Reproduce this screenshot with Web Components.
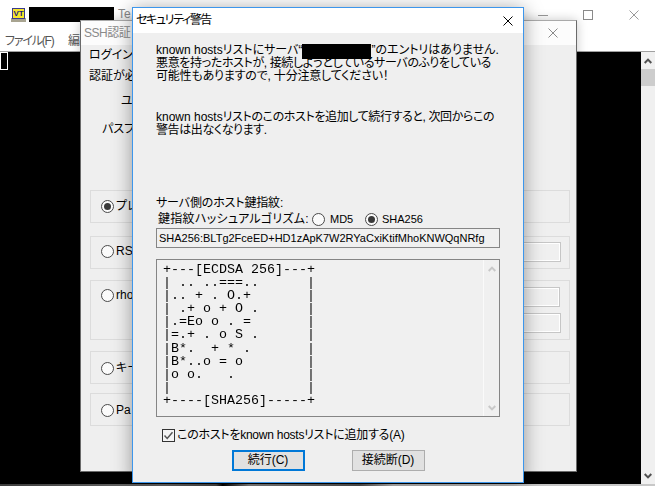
<!DOCTYPE html>
<html lang="ja">
<head>
<meta charset="utf-8">
<title>セキュリティ警告</title>
<style>
  html, body { margin: 0; height: 100%; }
  body {
    width: 655px;
    height: 486px;
    position: relative;
    overflow: hidden;
    background: #fff;
    color: #000;
    font: 12px/13px "Liberation Sans", "Noto Sans CJK JP", sans-serif;
    font-feature-settings: "palt";
    display: flex;
    flex-direction: column;
  }
</style>
</head>
<body>
  <term-window window-title="Te"></term-window>
  <task-strip></task-strip>

  <ssh-dialog>
    <auth-option label="プレ" checked style="--h:33px;--mt:0px;--radio-top:9px"></auth-option>
    <auth-option label="RS" fields="261" style="--h:33px;--mt:13px;--radio-top:8px;--field-top:5px"></auth-option>
    <auth-option label="rho" fields="260,261" style="--h:60px;--mt:11px;--radio-top:8px;--field-top:6px"></auth-option>
    <auth-option label="キー" style="--h:33px;--mt:11px;--radio-top:10px"></auth-option>
    <auth-option label="Pa" style="--h:33px;--mt:9px;--radio-top:10px"></auth-option>
  </ssh-dialog>

  <warn-dialog></warn-dialog>

<script>
const UI_FONT = '"Liberation Sans", "Noto Sans CJK JP", sans-serif';

class CloseGlyph extends HTMLElement {
  constructor() {
    super();
    this.attachShadow({ mode: 'open' });
  }

  connectedCallback() {
    this.shadowRoot.innerHTML = `
      <style>
        :host { display: block; width: 10px; height: 10px; color: inherit; }
        svg { display: block; }
      </style>
      <svg width="10" height="10" viewBox="0 0 10 10">
        <path d="M.5 .5 L9.5 9.5 M9.5 .5 L.5 9.5" stroke="currentColor" stroke-width="1" fill="none"/>
      </svg>
    `;
  }
}

class RadioMark extends HTMLElement {
  constructor() {
    super();
    this.attachShadow({ mode: 'open' });
  }

  connectedCallback() {
    const dot = this.hasAttribute('checked') ? '<i></i>' : '';
    this.shadowRoot.innerHTML = `
      <style>
        :host {
          display: flex;
          align-items: center;
          justify-content: center;
          flex: none;
          box-sizing: border-box;
          width: 13px;
          height: 13px;
          border: 1px solid #4a4a4a;
          border-radius: 50%;
          background: #fbfbfb;
        }
        i { display: block; width: 7px; height: 7px; border-radius: 50%; background: #3a3a3a; }
      </style>
      ${dot}
    `;
  }
}

class AuthOption extends HTMLElement {
  constructor() {
    super();
    this.attachShadow({ mode: 'open' });
  }

  connectedCallback() {
    const widths = (this.getAttribute('fields') || '').split(',').filter(Boolean);
    const fields = widths.map(w => `<div class="field" style="width:${w}px"></div>`).join('');
    this.shadowRoot.innerHTML = `
      <style>
        :host {
          display: flex;
          justify-content: space-between;
          box-sizing: border-box;
          width: 480px;
          height: var(--h);
          margin-top: var(--mt);
          padding: var(--radio-top, 9px) 8px 0 10px;
          border: 1px solid #dcdcdc;
        }
        .pick { display: flex; align-items: center; gap: 2px; align-self: flex-start; height: 13px; white-space: nowrap; }
        .fields { display: flex; flex-direction: column; gap: 6px; margin-top: calc(var(--field-top, 0px) - var(--radio-top, 9px) + 0px); }
        .field {
          box-sizing: border-box;
          height: 20px;
          border: 1px solid #c6c6c6;
          box-shadow: inset 0 0 0 1px #fff;
          background: #f0f0f0;
        }
      </style>
      <div class="pick">
        <radio-mark ${this.hasAttribute('checked') ? 'checked' : ''}></radio-mark>
        <span>${this.getAttribute('label')}</span>
      </div>
      <div class="fields">${fields}</div>
    `;
  }
}

class ScrollTrack extends HTMLElement {
  constructor() {
    super();
    this.attachShadow({ mode: 'open' });
  }

  connectedCallback() {
    const color = this.getAttribute('arrow') || '#555';
    this.shadowRoot.innerHTML = `
      <style>
        :host {
          display: flex;
          flex-direction: column;
          justify-content: space-between;
          flex: none;
          box-sizing: border-box;
          width: var(--track-w, 14px);
          background: #f0f0f0;
          position: relative;
        }
        .btn { height: 17px; display: flex; align-items: center; justify-content: center; }
        .thumb { position: absolute; left: 0; right: 0; top: 17px; height: 17px; background: #cdcdcd; }
        svg { display: block; }
      </style>
      <div class="btn">
        <svg width="8" height="6" viewBox="0 0 8 6"><path d="M.7 5 L4 1.6 L7.3 5" fill="none" stroke="${color}" stroke-width="2"/></svg>
      </div>
      ${this.hasAttribute('thumb') ? '<div class="thumb"></div>' : ''}
      <div class="btn">
        <svg width="8" height="6" viewBox="0 0 8 6"><path d="M.7 1 L4 4.4 L7.3 1" fill="none" stroke="${color}" stroke-width="2"/></svg>
      </div>
    `;
  }
}

class TermWindow extends HTMLElement {
  constructor() {
    super();
    this.attachShadow({ mode: 'open' });
  }

  connectedCallback() {
    this.shadowRoot.innerHTML = `
      <style>
        :host { display: flex; flex-direction: column; height: 484px; flex: none; background: #fff; }
        .title { display: flex; align-items: center; height: 31px; padding-left: 11px; flex: none; }
        .icon { display: block; flex: none; margin-top: -1px; }
        .hidden-name { width: 85px; height: 15px; background: #000; margin: -3px 4px 0 3px; flex: none; }
        .name { color: #8a8a8a; margin-top: -3px; white-space: nowrap; }
        .ctrl { margin-left: auto; display: flex; align-items: center; margin-top: -1px; color: #9a9a9a; }
        .ctrl > * { flex: none; }
        .min { width: 10px; height: 1px; background: #9a9a9a; margin-right: 35px; }
        .max { box-sizing: border-box; width: 10px; height: 10px; border: 1px solid #8a8a8a; margin-right: 36px; }
        close-glyph { margin-right: 16px; }
        .menu { display: flex; height: 20px; align-items: center; padding-left: 5px; color: #555; flex: none; }
        .menu .first { width: 63px; letter-spacing: -1.2px; white-space: nowrap; }
        .body { flex: 1; display: flex; border-top: 1px solid #a0a0a0; min-height: 0; }
        .screen { flex: 1; background: #000; }
        .cursor { box-sizing: border-box; width: 8px; height: 18px; border: 1px solid #fff; }
        scroll-track { --track-w: 14px; }
      </style>
      <div class="title">
        <svg class="icon" width="15" height="14" viewBox="0 0 15 14">
          <rect x="0" y="10" width="15" height="4" fill="#a8a490"/>
          <rect x="1.5" y=".5" width="12" height="10" fill="#f7e62a" stroke="#3a3a8c"/>
          <text x="7.5" y="8.4" font-family="Liberation Sans" font-size="8" font-weight="bold" text-anchor="middle" fill="#1c1c80">VT</text>
        </svg>
        <div class="hidden-name"></div>
        <div class="name">${this.getAttribute('window-title')}</div>
        <div class="ctrl">
          <div class="min"></div>
          <div class="max"></div>
          <close-glyph></close-glyph>
        </div>
      </div>
      <div class="menu"><span class="first">ファイル(F)</span><span>編</span></div>
      <div class="body">
        <div class="screen"><div class="cursor"></div></div>
        <scroll-track thumb arrow="#505050"></scroll-track>
      </div>
    `;
  }
}

class TaskStrip extends HTMLElement {
  constructor() {
    super();
    this.attachShadow({ mode: 'open' });
  }

  connectedCallback() {
    this.shadowRoot.innerHTML = `
      <style>
        :host {
          display: block;
          height: 2px;
          flex: none;
          background: linear-gradient(90deg, #3c3c3c 0, #6a6a6a 25%, #4a4a4a 33%, #000 34%, #888 38%, #555 55%, #bdbdbd 60%, #c8c8c8 100%);
        }
      </style>
    `;
  }
}

class SshDialog extends HTMLElement {
  constructor() {
    super();
    this.attachShadow({ mode: 'open' });
  }

  connectedCallback() {
    this.shadowRoot.innerHTML = `
      <style>
        :host {
          position: absolute;
          left: 80px;
          top: 20px;
          width: 497px;
          height: 452px;
          box-sizing: border-box;
          display: flex;
          flex-direction: column;
          background: #efefef;
          border: 1px solid #6a6a6a;
          border-top-color: #a9a9a9;
          box-shadow: 0 0 10px rgba(0, 0, 0, .22);
        }
        .title {
          display: flex;
          align-items: center;
          justify-content: space-between;
          height: 24px;
          flex: none;
          padding: 0 18px 0 3px;
          background: #fcfcfc;
          color: #8a8a8a;
        }
        .title span { letter-spacing: -.5px; }
        .content { flex: 1; padding: 0 0 0 8px; position: relative; }
        .line { white-space: nowrap; }
        .intro { padding-top: 4px; }
        .intro .line + .line { margin-top: 8px; }
        .cred { padding-top: 12px; }
        .cred .line { padding-left: 32px; }
        .cred .line + .line { margin-top: 15px; padding-left: 13px; }
        .options { margin-top: 54px; margin-left: 1px; }
      </style>
      <div class="title"><span>SSH認証</span><close-glyph></close-glyph></div>
      <div class="content">
        <div class="intro">
          <div class="line">ログイン</div>
          <div class="line">認証が必</div>
        </div>
        <div class="cred">
          <div class="line">ユ</div>
          <div class="line">パスフ</div>
        </div>
        <div class="options"><slot></slot></div>
      </div>
    `;
  }
}

class PushButton extends HTMLElement {
  constructor() {
    super();
    this.attachShadow({ mode: 'open' });
  }

  connectedCallback() {
    this.shadowRoot.innerHTML = `
      <style>
        :host {
          display: flex;
          align-items: center;
          justify-content: center;
          box-sizing: border-box;
          width: 73px;
          height: 21px;
          background: #e1e1e1;
          border: 1px solid #adadad;
        }
        :host([default]) { border: 2px solid #0078d7; }
      </style>
      <slot></slot>
    `;
  }
}

class WarnDialog extends HTMLElement {
  constructor() {
    super();
    this.attachShadow({ mode: 'open' });
  }

  connectedCallback() {
    const art = [
      '+---[ECDSA 256]---+',
      '| .. ..===..      |',
      '|.. + . O.+       |',
      '| .+ o + O .      |',
      '|.=Eo o . =       |',
      '|=.+ . o S .      |',
      '|B*.  + * .       |',
      '|B*..o = o        |',
      '|o o.   .         |',
      '|                 |',
      '+----[SHA256]-----+'
    ].join('\n');

    this.shadowRoot.innerHTML = `
      <style>
        :host {
          position: absolute;
          left: 132px;
          top: 7px;
          width: 392px;
          height: 476px;
          box-sizing: border-box;
          display: flex;
          flex-direction: column;
          background: #efefef;
          border: 1px solid #3c96ec;
          box-shadow: 0 2px 18px rgba(0, 0, 0, .38);
          font-family: ${UI_FONT};
        }
        .title {
          display: flex;
          align-items: center;
          justify-content: space-between;
          height: 25px;
          flex: none;
          padding: 0 10px 0 4px;
          background: #fff;
        }
        .title span { letter-spacing: -1.4px; margin-left: -1px; }
        .content { flex: 1; display: flex; flex-direction: column; padding: 11px 23px 0 23px; }
        .msg { line-height: 12.5px; white-space: nowrap; }
        .msg + .msg { margin-top: 29px; }
        .mask { display: inline-block; width: 69px; height: 15px; background: #000; vertical-align: -3px; margin: -2px 0; }
        .hash-head { margin-top: 61px; letter-spacing: -.15px; }
        .algo { display: flex; align-items: center; padding-left: 2px; margin-top: 3px; height: 13px; white-space: nowrap; }
        .algo .label { width: 154px; flex: none; letter-spacing: .3px; }
        .algo .small { font-size: 11px; }
        .algo .md5 { margin: 0 12px 0 5px; width: 23px; }
        .algo .sha { margin-left: 4px; }
        .box { box-sizing: border-box; width: 344px; border: 1px solid #858585; background: #f0f0f0; }
        .print { height: 20px; margin-top: 2px; padding-left: 2px; display: flex; align-items: center; white-space: nowrap; font-size: 11px; }
        .art {
          height: 158px;
          margin-top: 11px;
          display: flex;
          justify-content: space-between;
        }
        pre {
          margin: 0;
          padding: 3px 0 0 6px;
          font: 13.33px/13.1px "Liberation Mono", monospace;
          transform: translateZ(0);
        }
        .art scroll-track { --track-w: 16px; border-left: 1px solid #fafafa; }
        .confirm { display: flex; align-items: center; gap: 2px; margin: 12px 0 0 6px; height: 13px; white-space: nowrap; }
        .confirm span { letter-spacing: -.25px; }
        .tick { box-sizing: border-box; width: 13px; height: 13px; border: 1px solid #333; background: #f4f4f4; flex: none; }
        .tick svg { display: block; }
        .actions { display: flex; justify-content: center; gap: 47px; margin-top: 8px; padding-right: 0; }
      </style>
      <div class="title"><span>セキュリティ警告</span><close-glyph></close-glyph></div>
      <div class="content">
        <div class="msg">
          known hostsリストにサーバ“<span class="mask"></span>”のエントリはありません.<br>
          <span style="letter-spacing:-.37px">悪意を持ったホストが, 接続しようとしているサーバのふりをしている</span><br>
          <span style="letter-spacing:-.2px">可能性もありますので, 十分注意してください！</span>
        </div>
        <div class="msg">
          known hosts<span style="letter-spacing:-.38px">リストのこのホストを追加して続行すると, 次回からこの</span><br>
          <span style="letter-spacing:-.4px">警告は出なくなります.</span>
        </div>
        <div class="hash-head">サーバ側のホスト鍵指紋:</div>
        <div class="algo">
          <span class="label">鍵指紋ハッシュアルゴリズム:</span>
          <radio-mark></radio-mark><span class="md5 small">MD5</span>
          <radio-mark checked></radio-mark><span class="sha small">SHA256</span>
        </div>
        <div class="box print">SHA256:BLTg2FceED+HD1zApK7W2RYaCxiKtifMhoKNWQqNRfg</div>
        <div class="box art">
          <pre>${art}</pre>
          <scroll-track arrow="#c8c8c8"></scroll-track>
        </div>
        <div class="confirm">
          <div class="tick">
            <svg width="11" height="11" viewBox="0 0 11 11"><path d="M1.5 5.5 L4.2 8.4 L9.5 2.2" fill="none" stroke="#555" stroke-width="1.5"/></svg>
          </div>
          <span>このホストをknown hostsリストに追加する(A)</span>
        </div>
        <div class="actions">
          <push-button default>続行(C)</push-button>
          <push-button>接続断(D)</push-button>
        </div>
      </div>
    `;
  }
}

customElements.define('close-glyph', CloseGlyph);
customElements.define('radio-mark', RadioMark);
customElements.define('auth-option', AuthOption);
customElements.define('scroll-track', ScrollTrack);
customElements.define('term-window', TermWindow);
customElements.define('task-strip', TaskStrip);
customElements.define('ssh-dialog', SshDialog);
customElements.define('push-button', PushButton);
customElements.define('warn-dialog', WarnDialog);
</script>
</body>
</html>
